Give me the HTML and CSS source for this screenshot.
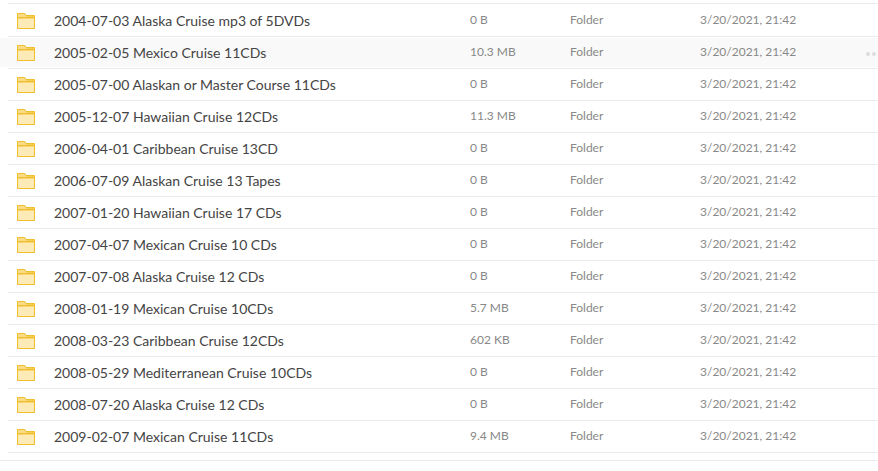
FILE: index.html
```html
<!DOCTYPE html>
<html lang="en">
<head>
    <meta charset="UTF-8">
    <title>Files</title>
    <link rel="stylesheet" href="styles.css">
</head>
<body>
    <svg class="sprite" width="0" height="0">
        <symbol id="folder" viewBox="0 0 18 16">
            <path d="M0 1C0 .4 .4 0 1 0H7.500L9.500 2H17C17.600 2 18 2.400 18 3V15C18 15.600 17.600 16 17 16H1C.4 16 0 15.600 0 15Z" fill="#f0bf2c"/>
            <path d="M1 1H7.200L9.700 3.500H17V4H1Z" fill="#f8dc8c"/>
            <rect x="1" y="5.500" width="16" height="9.500" fill="#fcebb6"/>
        </symbol>
    </svg>
    <div class="file-list">
        <div class="row"><svg class="icon"><use href="#folder"/></svg><span class="name">2004-07-03 Alaska Cruise mp3 of 5DVDs</span><span class="size">0 B</span><span class="type">Folder</span><span class="date">3/20/2021, 21:42</span></div>
        <div class="row hover"><svg class="icon"><use href="#folder"/></svg><span class="name">2005-02-05 Mexico Cruise 11CDs</span><span class="size">10.3 MB</span><span class="type">Folder</span><span class="date">3/20/2021, 21:42</span><span class="more"><i></i><i></i></span></div>
        <div class="row"><svg class="icon"><use href="#folder"/></svg><span class="name">2005-07-00 Alaskan or Master Course 11CDs</span><span class="size">0 B</span><span class="type">Folder</span><span class="date">3/20/2021, 21:42</span></div>
        <div class="row"><svg class="icon"><use href="#folder"/></svg><span class="name">2005-12-07 Hawaiian Cruise 12CDs</span><span class="size">11.3 MB</span><span class="type">Folder</span><span class="date">3/20/2021, 21:42</span></div>
        <div class="row"><svg class="icon"><use href="#folder"/></svg><span class="name">2006-04-01 Caribbean Cruise 13CD</span><span class="size">0 B</span><span class="type">Folder</span><span class="date">3/20/2021, 21:42</span></div>
        <div class="row"><svg class="icon"><use href="#folder"/></svg><span class="name">2006-07-09 Alaskan Cruise 13 Tapes</span><span class="size">0 B</span><span class="type">Folder</span><span class="date">3/20/2021, 21:42</span></div>
        <div class="row"><svg class="icon"><use href="#folder"/></svg><span class="name">2007-01-20 Hawaiian Cruise 17 CDs</span><span class="size">0 B</span><span class="type">Folder</span><span class="date">3/20/2021, 21:42</span></div>
        <div class="row"><svg class="icon"><use href="#folder"/></svg><span class="name">2007-04-07 Mexican Cruise 10 CDs</span><span class="size">0 B</span><span class="type">Folder</span><span class="date">3/20/2021, 21:42</span></div>
        <div class="row"><svg class="icon"><use href="#folder"/></svg><span class="name">2007-07-08 Alaska Cruise 12 CDs</span><span class="size">0 B</span><span class="type">Folder</span><span class="date">3/20/2021, 21:42</span></div>
        <div class="row"><svg class="icon"><use href="#folder"/></svg><span class="name">2008-01-19 Mexican Cruise 10CDs</span><span class="size">5.7 MB</span><span class="type">Folder</span><span class="date">3/20/2021, 21:42</span></div>
        <div class="row"><svg class="icon"><use href="#folder"/></svg><span class="name">2008-03-23 Caribbean Cruise 12CDs</span><span class="size">602 KB</span><span class="type">Folder</span><span class="date">3/20/2021, 21:42</span></div>
        <div class="row"><svg class="icon"><use href="#folder"/></svg><span class="name">2008-05-29 Mediterranean Cruise 10CDs</span><span class="size">0 B</span><span class="type">Folder</span><span class="date">3/20/2021, 21:42</span></div>
        <div class="row"><svg class="icon"><use href="#folder"/></svg><span class="name">2008-07-20 Alaska Cruise 12 CDs</span><span class="size">0 B</span><span class="type">Folder</span><span class="date">3/20/2021, 21:42</span></div>
        <div class="row"><svg class="icon"><use href="#folder"/></svg><span class="name">2009-02-07 Mexican Cruise 11CDs</span><span class="size">9.4 MB</span><span class="type">Folder</span><span class="date">3/20/2021, 21:42</span></div>
    </div>
    <div class="page-end"></div>
</body>
</html>
```
FILE: styles.css
```css
body {
    margin: 0;
    background: #fff;
    font-family: Lato, "Open Sans", sans-serif;
    color: #444;
    overflow: hidden;
}
.sprite {
    position: absolute;
}
.file-list {
    padding-top: 3px;
}
.row {
    position: relative;
    z-index: 0;
    display: flex;
    align-items: center;
    height: 32px;
    box-sizing: border-box;
    margin-left: 8px;
    padding-left: 9px;
    padding-bottom: 1px;
    border-top: 1px solid #ebebeb;
}
.row:first-child {
    height: 33px;
    padding-top: 1px;
}
.row:last-child {
    height: 33px;
    border-bottom: 1px solid #ebebeb;
}
/* full-width strip, the row itself starts 8px in */
.hover::before {
    content: "";
    position: absolute;
    z-index: -1;
    left: -8px;
    right: 0;
    top: 1px;
    bottom: 1px;
    background: #f9f9f9;
}
.icon {
    width: 18px;
    height: 16px;
    flex: none;
    margin-top: 2px;
    margin-right: 19px;
}
.name {
    width: 416px;
    font-size: 14px;
    flex: none;
}
.size,
.type,
.date {
    flex: none;
    margin-bottom: 2px;
    font-size: 12px;
    color: #888;
}
.size {
    width: 100px;
}
.type {
    width: 130px;
}
.more {
    position: absolute;
    right: 2px;
    top: 15px;
    display: flex;
    gap: 2px;
}
.more i {
    width: 4px;
    height: 4px;
    border-radius: 50%;
    background: #ddd;
}
.page-end {
    height: 1px;
    margin-top: 7px;
    background: #ebebeb;
}
```
